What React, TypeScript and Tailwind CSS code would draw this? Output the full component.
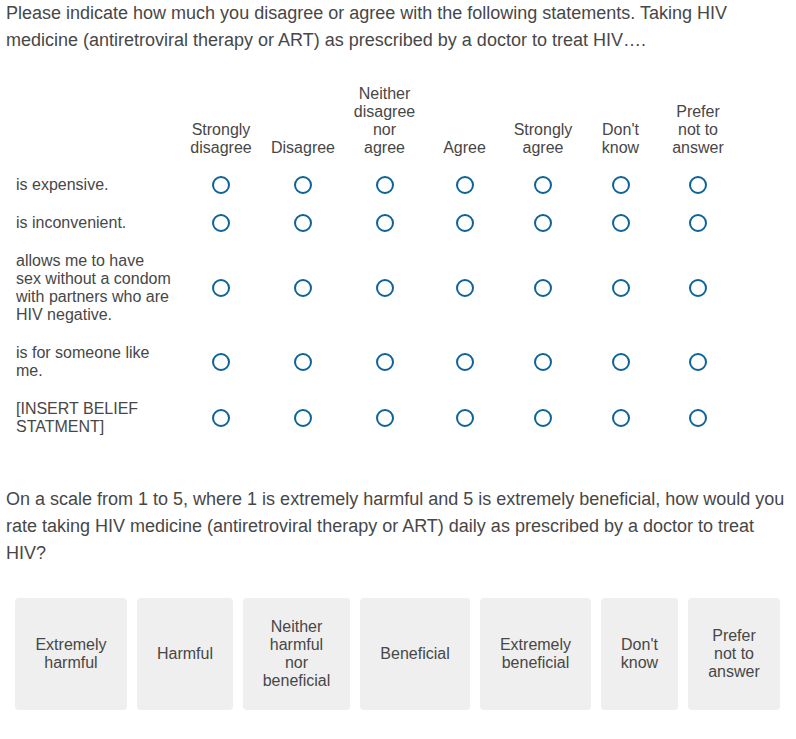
import React from "react"

const cols = [
  ["Strongly", "disagree"],
  ["Disagree"],
  ["Neither", "disagree", "nor", "agree"],
  ["Agree"],
  ["Strongly", "agree"],
  ["Don't", "know"],
  ["Prefer", "not to", "answer"],
]

const statements = [
  ["is expensive."],
  ["is inconvenient."],
  ["allows me to have", "sex without a condom", "with partners who are", "HIV negative."],
  ["is for someone like", "me."],
  ["[INSERT BELIEF", "STATMENT]"],
]

const choices = [
  { lines: ["Extremely", "harmful"], w: "w-[112px]" },
  { lines: ["Harmful"], w: "w-[96px]" },
  { lines: ["Neither", "harmful", "nor", "beneficial"], w: "w-[107px]" },
  { lines: ["Beneficial"], w: "w-[110px]" },
  { lines: ["Extremely", "beneficial"], w: "w-[111px]" },
  { lines: ["Don't", "know"], w: "w-[77px]" },
  { lines: ["Prefer", "not to", "answer"], w: "w-[92px]" },
]

const grid = "grid grid-cols-[170px_82px_82px_81px_79px_78px_77px_78px]"

function Lines({ lines }: { lines: string[] }) {
  return (
    <>
      {lines.map((l, i) => (
        <span key={i} className="block whitespace-nowrap">
          {l}
        </span>
      ))}
    </>
  )
}

function Radio() {
  return <span className="block h-[18px] w-[18px] rounded-full border-2 border-[#0e6399] bg-white" />
}

export default function App() {
  return (
    <div className="min-h-[739px] bg-white px-[6px] text-[#474747]" style={{ fontFamily: '"Liberation Sans", Arial, sans-serif' }}>
      <p className="text-[18px] leading-[27px]">
        Please indicate how much you disagree or agree with the following statements. Taking HIV medicine (antiretroviral therapy or ART) as prescribed by a doctor to treat HIV….
      </p>

      <div className="ml-[4px] mt-[31px] text-[16px] leading-[18px]">
        <div className={`${grid} items-end pb-[9px]`}>
          <div />
          {cols.map((c, i) => (
            <div key={i} className="text-center">
              <Lines lines={c} />
            </div>
          ))}
        </div>
        {statements.map((s, r) => (
          <div key={r} className={`${grid} items-center py-[10px]`}>
            <div className="pl-[6px]">
              <Lines lines={s} />
            </div>
            {cols.map((_, i) => (
              <div key={i} className="flex justify-center">
                <Radio />
              </div>
            ))}
          </div>
        ))}
      </div>

      <p className="mt-[40px] text-[18px] leading-[27px]">
        On a scale from 1 to 5, where 1 is extremely harmful and 5 is extremely beneficial, how would you rate taking HIV medicine (antiretroviral therapy or ART) daily as prescribed by a doctor to treat HIV?
      </p>

      <div className="ml-[9px] mt-[31px] flex gap-[10px] text-[16px] leading-[18px]">
        {choices.map((c, i) => (
          <div key={i} className={`${c.w} flex h-[112px] flex-col items-center justify-center rounded-[4px] bg-[#efefef] text-center`}>
            <Lines lines={c.lines} />
          </div>
        ))}
      </div>
    </div>
  )
}
